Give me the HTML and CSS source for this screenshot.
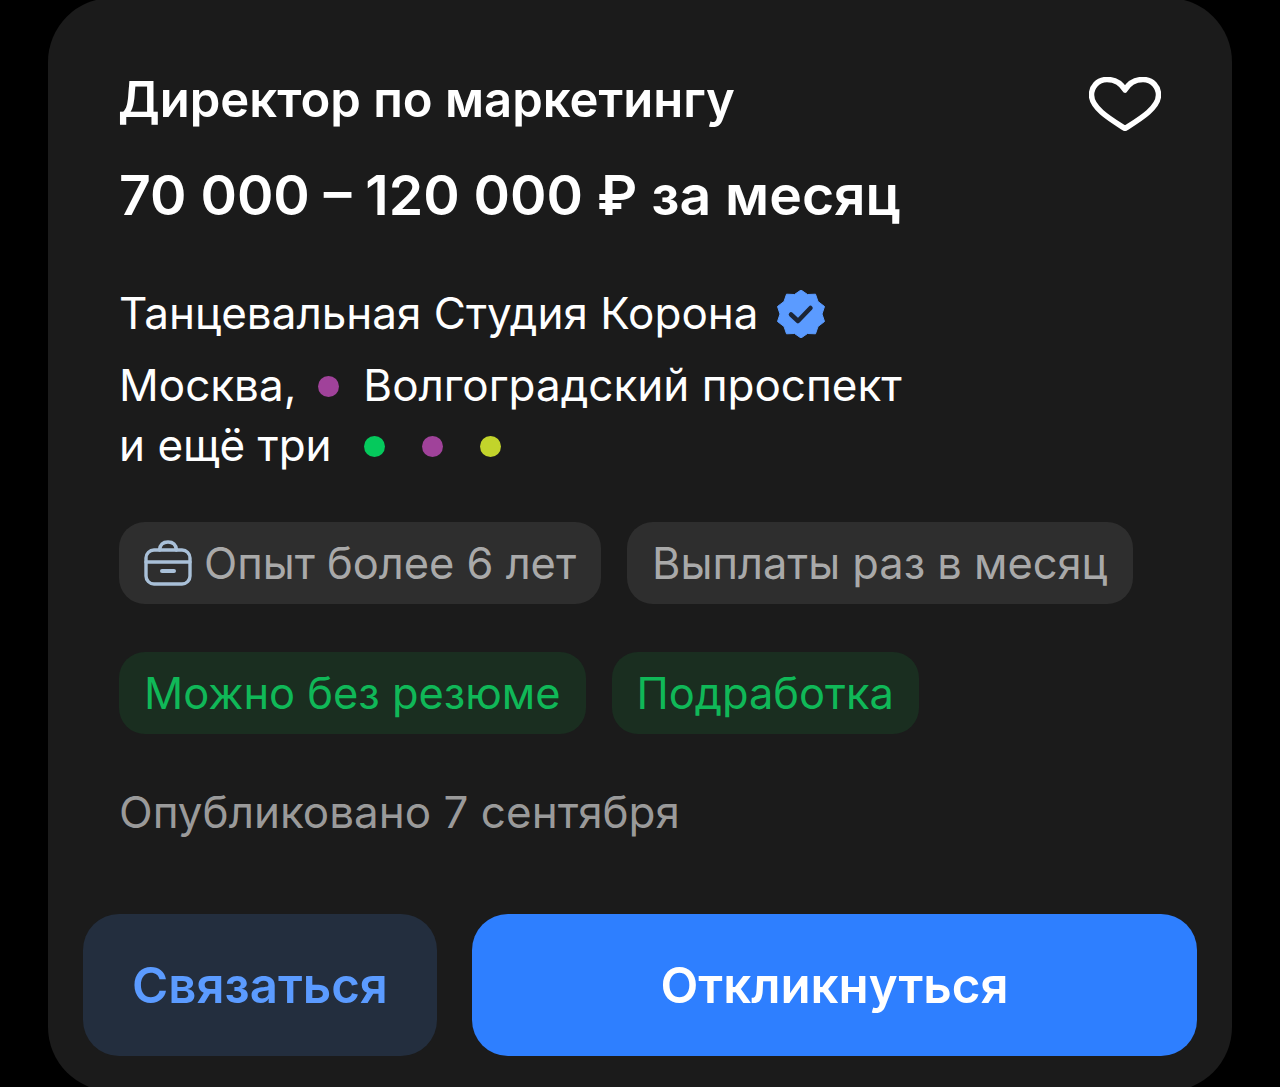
FILE: index.html
```html
<!DOCTYPE html>
<html lang="ru">
<head>
  <meta charset="UTF-8" />
  <meta name="viewport" content="width=device-width, initial-scale=1.0"/>
  <title>Вакансия</title>
  <link rel="stylesheet" href="styles.css">
</head>
<body>
  <div class="card">
    <div class="info">
      <div class="head">
        <h1 class="title">Директор по маркетингу</h1>
        <svg class="heart" viewBox="0 0 72 54" fill="none" stroke="#fff" stroke-width="5.500" stroke-linejoin="round">
          <path d="M36 13 C32 6 25 2.500 18 2.500 C8.500 2.500 2.500 10 2.500 18 C2.500 31 21 42 36 51.500 C51 42 69.500 31 69.500 18 C69.500 10 63.500 2.500 54 2.500 C47 2.500 40 6 36 13 Z"/>
        </svg>
      </div>
      <div class="salary">70 000 – 120 000 ₽ за месяц</div>

      <div class="company">
        <span>Танцевальная Студия Корона</span>
        <svg class="badge" viewBox="0 0 48 48">
          <path fill="#5b9bff" d="M24 0 L30.500 4.500 L38.500 4.200 L41 11.500 L47.500 16.500 L45 24 L47.500 31.500 L41 36.500 L38.500 43.800 L30.500 43.500 L24 48 L17.500 43.500 L9.500 43.800 L7 36.500 L0.500 31.500 L3 24 L0.500 16.500 L7 11.500 L9.500 4.200 L17.500 4.500 Z" stroke="#5b9bff" stroke-width="1" stroke-linejoin="round"/>
          <path fill="none" stroke="#1c2536" stroke-width="4.500" stroke-linecap="round" stroke-linejoin="round" d="M14 24.500 L21 31 L33.500 18"/>
        </svg>
      </div>
      <div class="place place-city">
        <span>Москва,</span>
        <i class="dot dot-city purple"></i>
        <span>Волгоградский проспект</span>
      </div>
      <div class="place">
        <span>и ещё три</span>
        <i class="dot dot-more green"></i>
        <i class="dot purple"></i>
        <i class="dot lime"></i>
      </div>

      <div class="tags tags-first">
        <div class="tag">
          <svg class="case" viewBox="0 0 48 46" fill="none" stroke="#a9c0d8" stroke-width="3.400" stroke-linecap="round" stroke-linejoin="round">
            <path d="M15.500 10 C16 4.500 19.500 2 24 2 C28.500 2 32 4.500 32.500 10"/>
            <rect x="2" y="10" width="44" height="34" rx="8"/>
            <path d="M2 22 H46"/>
            <path d="M18 31 H30" stroke-width="4"/>
          </svg>
          Опыт более 6 лет
        </div>
        <div class="tag">Выплаты раз в месяц</div>
      </div>
      <div class="tags">
        <div class="tag tag-green">Можно без резюме</div>
        <div class="tag tag-green">Подработка</div>
      </div>

      <div class="date">Опубликовано 7 сентября</div>
    </div>

    <div class="actions">
      <button class="btn btn-contact">Связаться</button>
      <button class="btn btn-apply">Откликнуться</button>
    </div>
  </div>
</body>
</html>
```

FILE: styles.css
```css
html {
  height: 100%;
  overflow: hidden;
}

body {
  margin: 0;
  padding: 0 48px;
  background: #000;
  font-family: Inter, 'Noto Sans', sans-serif;
  color: #fff;
}

.card {
  margin-top: -2px;
  height: 1093px;
  padding: 0 35px;
  box-sizing: border-box;
  background-color: #1b1b1b;
  border-radius: 64px;
}

.info {
  padding: 70px 36px 0;
  height: 916px;
  box-sizing: border-box;
}

.head {
  display: flex;
  justify-content: space-between;
  align-items: center;
  height: 64px;
}

.title {
  margin: 0 0 0 -1px;
  font-size: 49px;
  font-weight: 600;
  line-height: 64px;
}

.heart {
  width: 72px;
  height: 54px;
  margin-top: 8px;
}

.salary {
  margin-top: 31px;
  font-size: 55.300px;
  font-weight: 600;
  line-height: 64px;
}

.company {
  display: flex;
  align-items: center;
  gap: 19px;
  margin-top: 56px;
  font-size: 44px;
  line-height: 60px;
}

.badge {
  width: 48px;
  height: 48px;
  margin-top: 2px;
}

.place {
  display: flex;
  align-items: center;
  font-size: 44px;
  line-height: 60px;
}

.place-city {
  margin-top: 12px;
}

.dot {
  width: 21px;
  height: 21px;
  margin-top: 2px;
  margin-right: 37px;
  border-radius: 50%;
}

.dot-city {
  margin-left: 22px;
  margin-right: 24px;
}

.dot-more {
  margin-left: 32px;
}

.purple { background-color: #a0429a; }
.green { background-color: #05c95c; }
.lime { background-color: #c2d42b; }

.tags {
  display: flex;
  gap: 26px;
  margin-top: 48px;
}

.tags-first {
  margin-top: 47px;
}

.tag {
  display: flex;
  align-items: center;
  gap: 12px;
  height: 82px;
  padding: 0 25px;
  background-color: #2e2e2e;
  border-radius: 26px;
  font-size: 43.400px;
  color: #a9a9a9;
}

.tag-green {
  background-color: #1a2e20;
  color: #10b858;
}

.case {
  width: 48px;
  height: 46px;
}

.date {
  margin-top: 48px;
  font-size: 44px;
  line-height: 60px;
  color: #9a9a9a;
}

.actions {
  display: flex;
  gap: 35px;
}

.btn {
  height: 142px;
  border: none;
  border-radius: 36px;
  font-family: inherit;
  font-size: 49.200px;
  font-weight: 600;
}

.btn-contact {
  width: 354px;
  background-color: #232e3e;
  color: #5b9bff;
}

.btn-apply {
  flex: 1;
  background-color: #2e7fff;
  color: #fff;
}
```
